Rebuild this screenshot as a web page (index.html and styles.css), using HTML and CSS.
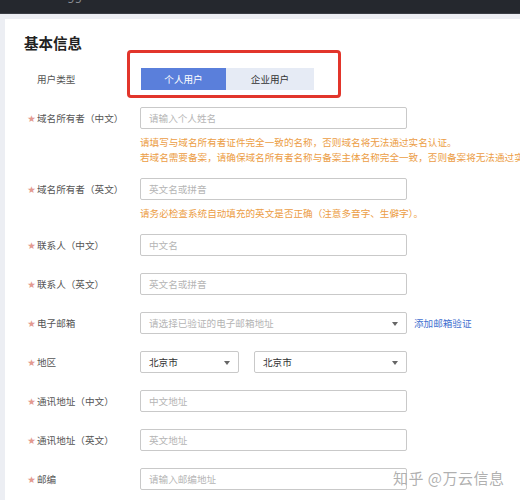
FILE: index.html
```html
<!DOCTYPE html>
<html lang="zh-CN">
<head>
<meta charset="utf-8">
<title>基本信息</title>
<link rel="stylesheet" href="styles.css">
</head>
<body>
<div class="topbar"><span class="topglyph">gg</span></div>
<div class="page">
  <div class="card">
    <h2 class="title">基本信息</h2>

    <div class="row usertype">
      <div class="label plain">用户类型</div>
      <div class="segment">
        <span class="seg active">个人用户</span>
        <span class="seg">企业用户</span>
      </div>
      <div class="redbox"></div>
    </div>

    <div class="row">
      <div class="label"><span class="star">★</span>域名所有者（中文）</div>
      <div class="field">
        <div class="input ph">请输入个人姓名</div>
        <div class="hint">请填写与域名所有者证件完全一致的名称，否则域名将无法通过实名认证。<br>若域名需要备案，请确保域名所有者名称与备案主体名称完全一致，否则备案将无法通过实名认证。</div>
      </div>
    </div>

    <div class="row">
      <div class="label"><span class="star">★</span>域名所有者（英文）</div>
      <div class="field">
        <div class="input ph">英文名或拼音</div>
        <div class="hint">请务必检查系统自动填充的英文是否正确（注意多音字、生僻字）。</div>
      </div>
    </div>

    <div class="row">
      <div class="label"><span class="star">★</span>联系人（中文）</div>
      <div class="field"><div class="input ph">中文名</div></div>
    </div>

    <div class="row">
      <div class="label"><span class="star">★</span>联系人（英文）</div>
      <div class="field"><div class="input ph">英文名或拼音</div></div>
    </div>

    <div class="row">
      <div class="label"><span class="star">★</span>电子邮箱</div>
      <div class="field inline">
        <div class="input select ph">请选择已验证的电子邮箱地址<span class="arrow"></span></div>
        <a class="link">添加邮箱验证</a>
      </div>
    </div>

    <div class="row">
      <div class="label"><span class="star">★</span>地区</div>
      <div class="field inline region">
        <div class="input select small">北京市<span class="arrow"></span></div>
        <div class="input select medium">北京市<span class="arrow"></span></div>
      </div>
    </div>

    <div class="row">
      <div class="label"><span class="star">★</span>通讯地址（中文）</div>
      <div class="field"><div class="input ph">中文地址</div></div>
    </div>

    <div class="row">
      <div class="label"><span class="star">★</span>通讯地址（英文）</div>
      <div class="field"><div class="input ph">英文地址</div></div>
    </div>

    <div class="row">
      <div class="label"><span class="star">★</span>邮编</div>
      <div class="field"><div class="input ph">请输入邮编地址</div></div>
    </div>
  </div>
</div>
<div class="watermark">知乎 @万云信息</div>
</body>
</html>
```

FILE: styles.css
```css
html, body {
  margin: 0;
  padding: 0;
}
body {
  width: 520px;
  height: 500px;
  overflow: hidden;
  position: relative;
  background: #eceef3;
  font-family: "Noto Sans CJK SC", "Noto Sans", sans-serif;
  font-size: 9.6px;
  color: #555;
}
.topbar {
  height: 14px;
  background: #25282e;
  border-bottom: 1px solid #3a3d44;
  box-sizing: border-box;
  position: relative;
  overflow: hidden;
}
.topglyph {
  position: absolute;
  left: 67px;
  top: -11px;
  font-size: 12px;
  color: #8a8d93;
  font-family: "DejaVu Sans", sans-serif;
}
.page {
  padding: 5px 0 0 5px;
  width: 700px;
  height: 481px;
  overflow: hidden;
}
.card {
  background: #fff;
  padding: 14px 0 0 0;
  height: 100%;
  box-sizing: border-box;
}
.title {
  margin: 0 0 15px 19px;
  font-size: 14.5px;
  line-height: 20px;
  font-weight: 700;
  color: #222;
}
.row {
  display: flex;
  align-items: flex-start;
  margin-bottom: 17px;
  position: relative;
}
.label {
  width: 114px;
  padding-left: 21px;
  height: 22px;
  line-height: 22px;
  white-space: nowrap;
  color: #555;
  flex: none;
}
.label.plain {
  padding-left: 32px;
  width: 104px;
}
.star {
  display: inline-block;
  width: 11px;
  font-size: 9.5px;
  color: #e39a90;
  font-family: "DejaVu Sans", sans-serif;
  text-align: center;
}
.segment {
  display: flex;
  height: 22px;
}
.seg {
  display: flex;
  align-items: center;
  justify-content: center;
  width: 86px;
  height: 22px;
  background: #e6ebf5;
  color: #333;
}
.seg.active {
  width: 85px;
  background: #5a7fdb;
  color: #fff;
}
.seg + .seg {
  width: 88px;
}
.redbox {
  position: absolute;
  left: 122px;
  top: -18px;
  width: 214px;
  height: 48px;
  box-sizing: border-box;
  border: 3px solid #e2352b;
  border-radius: 4px;
}
.field {
  display: flex;
  flex-direction: column;
}
.field.inline {
  flex-direction: row;
  align-items: center;
}
.input {
  width: 267px;
  height: 22px;
  box-sizing: border-box;
  border: 1px solid #c9c9c9;
  border-radius: 2px;
  padding-left: 8px;
  line-height: 20px;
  color: #333;
  position: relative;
  white-space: nowrap;
}
.input.ph {
  color: #b5b5b5;
}
.arrow {
  position: absolute;
  right: 8px;
  top: 9px;
  width: 0;
  height: 0;
  border-left: 3px solid transparent;
  border-right: 3px solid transparent;
  border-top: 4px solid #666;
}
.input.small {
  width: 99px;
}
.input.medium {
  width: 153px;
  margin-left: 15px;
}
.link {
  margin-left: 7px;
  color: #3f6fcf;
  line-height: 22px;
  white-space: nowrap;
}
.hint {
  margin-top: 5.5px;
  margin-bottom: -3.5px;
  line-height: 15px;
  color: #ec9d45;
  white-space: nowrap;
}
.watermark {
  position: absolute;
  left: 393px;
  top: 467px;
  font-size: 15px;
  line-height: 22px;
  letter-spacing: 0.5px;
  color: rgba(150, 150, 150, 0.75);
  text-shadow: 0 0 2px #fff;
  white-space: nowrap;
}
```
